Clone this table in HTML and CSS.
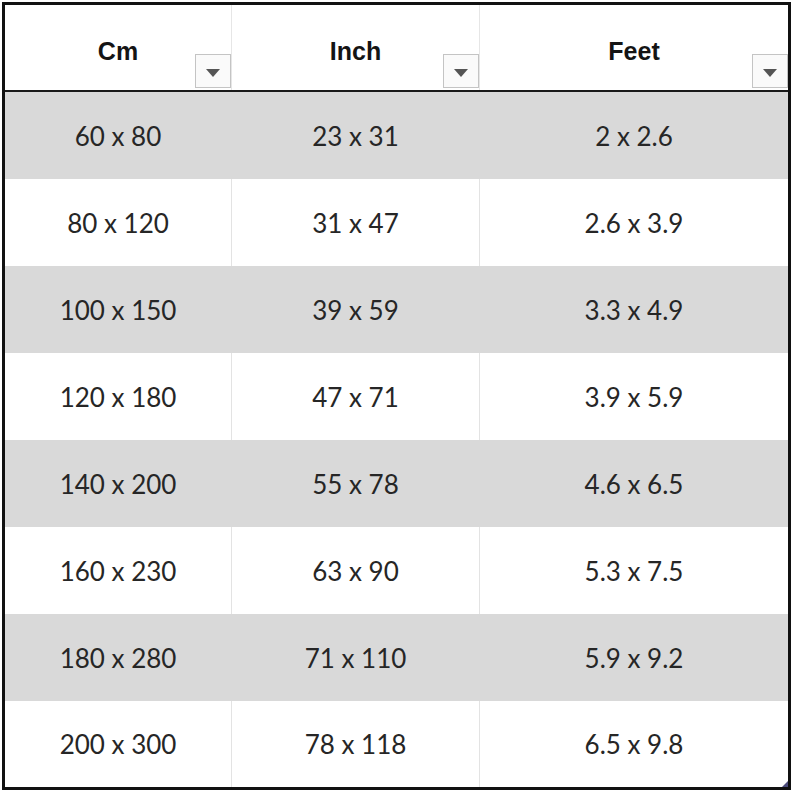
FILE: index.html
```html
<!DOCTYPE html>
<html>
<head>
<meta charset="utf-8">
<link rel="stylesheet" href="styles.css">
</head>
<body>
<div class="sheet">
  <div class="row head">
    <div class="cell"><span class="title">Cm</span><span class="filter"><i></i></span></div>
    <div class="cell"><span class="title">Inch</span><span class="filter"><i></i></span></div>
    <div class="cell"><span class="title">Feet</span><span class="filter"><i></i></span></div>
  </div>
  <div class="row band"><div class="cell">60 x 80</div><div class="cell">23 x 31</div><div class="cell">2 x 2.6</div></div>
  <div class="row"><div class="cell">80 x 120</div><div class="cell">31 x 47</div><div class="cell">2.6 x 3.9</div></div>
  <div class="row band"><div class="cell">100 x 150</div><div class="cell">39 x 59</div><div class="cell">3.3 x 4.9</div></div>
  <div class="row"><div class="cell">120 x 180</div><div class="cell">47 x 71</div><div class="cell">3.9 x 5.9</div></div>
  <div class="row band"><div class="cell">140 x 200</div><div class="cell">55 x 78</div><div class="cell">4.6 x 6.5</div></div>
  <div class="row"><div class="cell">160 x 230</div><div class="cell">63 x 90</div><div class="cell">5.3 x 7.5</div></div>
  <div class="row band"><div class="cell">180 x 280</div><div class="cell">71 x 110</div><div class="cell">5.9 x 9.2</div></div>
  <div class="row last"><div class="cell">200 x 300</div><div class="cell">78 x 118</div><div class="cell">6.5 x 9.8</div></div>
  <span class="handle"></span>
</div>
</body>
</html>
```
FILE: styles.css
```css
html, body {
  margin: 0;
  padding: 0;
  background: #ffffff;
}

.sheet {
  position: relative;
  box-sizing: border-box;
  width: 789px;
  height: 788px;
  margin: 2px 0 0 2px;
  border: 3px solid #111111;
  display: flex;
  flex-direction: column;
  background: #ffffff;
}

.row {
  display: grid;
  grid-template-columns: 227px 248px 1fr;
  height: 87px;
  flex: none;
}

.row.last {
  flex: 1;
  height: auto;
}

.cell {
  display: flex;
  align-items: center;
  justify-content: center;
  font-family: Lato, "Open Sans", sans-serif;
  font-size: 26px;
  color: #262626;
  border-right: 1px solid #e3e3e3;
}

.cell:last-child {
  border-right: none;
}

.band {
  background: #d9d9d9;
}

.band .cell {
  border-right-color: #d9d9d9;
}

.head {
  height: 85px;
  border-bottom: 2px solid #1a1a1a;
}

.head .cell {
  position: relative;
  border-right-color: #e6e6e6;
}

.title {
  font-family: "Liberation Sans", Arial, sans-serif;
  font-weight: bold;
  font-size: 25px;
  color: #141414;
  margin-top: 7px;
}

.filter {
  position: absolute;
  right: 0;
  bottom: 2px;
  box-sizing: border-box;
  width: 36px;
  height: 34px;
  border: 1px solid #c4c4c4;
  background: #fafafa;
  display: flex;
  align-items: center;
  justify-content: center;
}

.filter i {
  display: block;
  width: 0;
  height: 0;
  margin-top: 3px;
  border-left: 7px solid transparent;
  border-right: 7px solid transparent;
  border-top: 8px solid #555555;
}

.handle {
  position: absolute;
  right: 0;
  bottom: 0;
  width: 0;
  height: 0;
  border-left: 6px solid transparent;
  border-bottom: 6px solid #4a4a7a;
}
```
